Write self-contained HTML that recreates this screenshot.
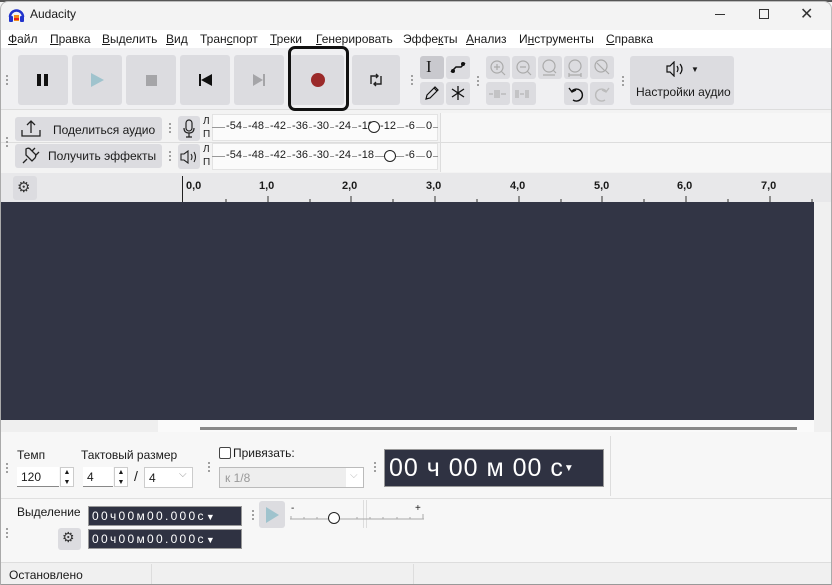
<!DOCTYPE html>
<html><head><meta charset="utf-8"><style>
*{margin:0;padding:0;box-sizing:border-box}
body{width:832px;height:585px;overflow:hidden;background:#f3f3f3;font-family:"Liberation Sans","Noto Sans CJK SC",sans-serif;font-size:12px;color:#1a1a1a;position:relative}
.a{position:absolute}
.btn{position:absolute;background:#dcdce0;border-radius:3px}
.grip{position:absolute;width:4px;height:12px;background-image:radial-gradient(circle,#999 1px,transparent 1.2px);background-size:4px 4px}
.sb{position:absolute;background:#dcdce0;border-radius:3px}
.dark{position:absolute;background:#2f3242;color:#fff;border:1px solid #999}
u{text-decoration:underline}
.m span{position:absolute;transform:translateX(-50%);font-size:11px;background:#fbfbfb;padding:0 1px}
</style></head><body>
<div class="a" style="left:0;top:0;width:832px;height:2px;background:#555"></div>
<!-- title -->
<div class="a" style="left:0;top:1px;width:832px;height:29px;background:#f3f3f3;border-radius:8px 8px 0 0;border:1px solid #bbb;border-bottom:none"></div>
<svg class="a" style="left:8px;top:7px" width="17" height="16" viewBox="0 0 17 16"><path d="M2 10 A6.5 6.5 0 0 1 15 10" fill="none" stroke="#2233cc" stroke-width="2.5"/><rect x="1" y="9" width="4" height="6" rx="1" fill="#2233cc"/><rect x="12" y="9" width="4" height="6" rx="1" fill="#2233cc"/><rect x="6" y="8" width="5" height="6" fill="#f28c1c"/><rect x="6" y="11" width="5" height="2" fill="#e82020"/></svg>
<div class="a" style="left:30px;top:7px;font-size:12px">Audacity</div>
<div class="a" style="left:715px;top:14px;width:10px;height:1px;background:#333"></div>
<div class="a" style="left:759px;top:9px;width:10px;height:10px;border:1px solid #333"></div>
<div class="a" style="left:800px;top:4px;font-size:16px;color:#333">✕</div>
<!-- menu -->
<div class="a" style="left:1px;top:30px;width:830px;height:18px;background:#fff"></div>
<div class="a" style="top:32px;left:8px;font-size:12px;white-space:nowrap;word-spacing:0">
<span class="a" style="left:0"><u>Ф</u>айл</span><span class="a" style="left:42px"><u>П</u>равка</span><span class="a" style="left:94px"><u>В</u>ыделить</span><span class="a" style="left:158px"><u>В</u>ид</span><span class="a" style="left:192px">Тран<u>с</u>порт</span><span class="a" style="left:262px"><u>Т</u>реки</span><span class="a" style="left:308px"><u>Г</u>енерировать</span><span class="a" style="left:395px">Эффе<u>к</u>ты</span><span class="a" style="left:458px"><u>А</u>нализ</span><span class="a" style="left:511px">И<u>н</u>струменты</span><span class="a" style="left:598px"><u>С</u>правка</span></div>
<!-- toolbar -->
<div class="a" style="left:1px;top:48px;width:830px;height:62px;background:#f0f0f2;border-bottom:1px solid #ddd"></div>
<div class="grip" style="left:5px;top:74px"></div>
<div class="btn" style="left:18px;top:55px;width:50px;height:50px"></div>
<div class="a" style="left:37px;top:74px;width:4px;height:12px;background:#111"></div><div class="a" style="left:44px;top:74px;width:4px;height:12px;background:#111"></div>
<div class="btn" style="left:72px;top:55px;width:50px;height:50px"></div>
<div class="a" style="left:91px;top:73px;border-left:13px solid #9fc3cd;border-top:7px solid transparent;border-bottom:7px solid transparent"></div>
<div class="btn" style="left:126px;top:55px;width:50px;height:50px"></div>
<div class="a" style="left:146px;top:75px;width:11px;height:11px;background:#a5a5a8"></div>
<div class="btn" style="left:180px;top:55px;width:50px;height:50px"></div>
<div class="a" style="left:199px;top:74px;width:2px;height:12px;background:#111"></div><div class="a" style="left:201px;top:74px;border-right:11px solid #111;border-top:6px solid transparent;border-bottom:6px solid transparent"></div>
<div class="btn" style="left:234px;top:55px;width:50px;height:50px"></div>
<div class="a" style="left:253px;top:74px;border-left:10px solid #a5a5a8;border-top:6px solid transparent;border-bottom:6px solid transparent"></div><div class="a" style="left:263px;top:74px;width:2px;height:12px;background:#a5a5a8"></div>
<div class="btn" style="left:290px;top:55px;width:54px;height:50px"></div>
<div class="a" style="left:288px;top:46px;width:61px;height:65px;border:3px solid #111;border-radius:7px"></div>
<div class="a" style="left:311px;top:73px;width:14px;height:14px;border-radius:50%;background:#9b2a2a"></div>
<div class="btn" style="left:352px;top:55px;width:48px;height:50px"></div>
<svg class="a" style="left:368px;top:72px" width="16" height="16" viewBox="0 0 16 16" fill="none" stroke="#222" stroke-width="1.4"><path d="M3 12V4h7M8 2l2 2-2 2M13 4v8H6M8 14l-2-2 2-2"/></svg>
<div class="grip" style="left:410px;top:74px"></div>
<div class="btn" style="left:420px;top:56px;width:24px;height:23px;background:#c9c9ce"></div>
<div class="a" style="left:426px;top:57px;font-size:17px;font-family:'Liberation Serif',serif">I</div>
<div class="btn" style="left:446px;top:56px;width:24px;height:23px"></div>
<svg class="a" style="left:448px;top:58px" width="20" height="20"><path d="M3 14 L8 9 L13 9 L17 5" stroke="#111" stroke-width="1.5" fill="none"/><circle cx="5" cy="13" r="2" fill="#111"/><circle cx="15" cy="6" r="2" fill="#111"/></svg>
<div class="btn" style="left:420px;top:82px;width:24px;height:23px"></div>
<svg class="a" style="left:423px;top:84px" width="18" height="18"><path d="M3 15l1-4 8-8 3 3-8 8z M11 4l3 3" stroke="#111" stroke-width="1.2" fill="none"/></svg>
<div class="btn" style="left:446px;top:82px;width:24px;height:23px"></div>
<svg class="a" style="left:449px;top:84px" width="18" height="18" stroke="#111" stroke-width="1.3"><path d="M9 2v14M3 5l12 8M15 5L3 13"/></svg>
<div class="grip" style="left:476px;top:75px"></div>
<div class="btn" style="left:486px;top:56px;width:24px;height:23px"></div><div class="btn" style="left:512px;top:56px;width:24px;height:23px"></div><div class="btn" style="left:538px;top:56px;width:24px;height:23px"></div><div class="btn" style="left:564px;top:56px;width:24px;height:23px"></div><div class="btn" style="left:590px;top:56px;width:24px;height:23px"></div>
<svg class="a" style="left:486px;top:56px" width="130" height="24" fill="none" stroke="#aaa" stroke-width="1.2"><circle cx="11" cy="11" r="6"/><path d="M15 15l4 4M8 11h6M11 8v6"/><circle cx="37" cy="11" r="6"/><path d="M41 15l4 4M34 11h6"/><circle cx="63" cy="10" r="6"/><path d="M57 19h12M67 14l3 3"/><circle cx="89" cy="10" r="6"/><path d="M83 19h12M83 17v4M95 17v4"/><circle cx="115" cy="10" r="6"/><path d="M119 14l4 4M111 7l8 8"/></svg>
<div class="btn" style="left:486px;top:82px;width:24px;height:23px"></div><div class="btn" style="left:512px;top:82px;width:24px;height:23px"></div>
<svg class="a" style="left:486px;top:82px" width="50" height="23" fill="none" stroke="#aaa" stroke-width="1"><path d="M3 12h4M9 8v8M11 8v8M13 8v8M15 12h5M30 8v8M32 8v8M34 12h4M40 8v8M42 8v8"/></svg>
<div class="btn" style="left:564px;top:82px;width:24px;height:23px"></div><div class="btn" style="left:590px;top:82px;width:24px;height:23px"></div>
<svg class="a" style="left:564px;top:82px" width="50" height="23" fill="none" stroke-width="1.4"><path d="M8 9a6 6 0 1 1 1 9" stroke="#111"/><path d="M5 6l3 4 4-2" stroke="#111"/><path d="M42 9a6 6 0 1 0-1 9" stroke="#bbb"/><path d="M45 6l-3 4-4-2" stroke="#bbb"/></svg>
<div class="grip" style="left:621px;top:75px"></div>
<div class="btn" style="left:630px;top:56px;width:104px;height:49px"></div>
<svg class="a" style="left:665px;top:61px" width="22" height="16"><path d="M2 5h3l4-4v14l-4-4H2z" fill="none" stroke="#111" stroke-width="1.2"/><path d="M12 5q2 3 0 6M15 3q4 5 0 10" fill="none" stroke="#111" stroke-width="1.2"/></svg>
<div class="a" style="left:691px;top:65px;font-size:8px">▼</div>
<div class="a" style="left:636px;top:85px;font-size:12px">Настройки аудио</div>
<!-- meter rows -->
<div class="a" style="left:1px;top:111px;width:830px;height:62px;background:#f3f3f3"></div>
<div class="a" style="left:440px;top:113px;width:391px;height:59px;background:#f7f7f7;border-left:1px solid #ddd"></div>
<div class="a" style="left:1px;top:142px;width:830px;height:1px;background:#ddd"></div>
<div class="grip" style="left:5px;top:136px"></div>
<div class="sb" style="left:15px;top:117px;width:147px;height:24px"></div>
<svg class="a" style="left:21px;top:119px" width="20" height="19"><path d="M1 11v6h18v-6M10 14V2M6 6l4-4 4 4" stroke="#222" stroke-width="1.3" fill="none"/></svg>
<div class="a" style="left:53px;top:123px">Поделиться аудио</div>
<div class="sb" style="left:15px;top:144px;width:147px;height:24px"></div>
<svg class="a" style="left:20px;top:145px" width="22" height="20"><path d="M3 18l4-4M6 10l6 6 3-3q2-3-1-5l-3-3q-2-3-5-1z M12 6l3-3M16 10l3-3" stroke="#222" stroke-width="1.3" fill="none"/></svg>
<div class="a" style="left:48px;top:149px">Получить эффекты</div>
<div class="grip" style="left:168px;top:122px"></div><div class="grip" style="left:168px;top:150px"></div>
<div class="sb" style="left:178px;top:116px;width:22px;height:25px"></div>
<svg class="a" style="left:183px;top:119px" width="12" height="20"><rect x="3" y="1" width="6" height="11" rx="3" fill="none" stroke="#222" stroke-width="1.2"/><path d="M1 9q0 5 5 5t5-5M6 14v4M3 18h6" fill="none" stroke="#222" stroke-width="1.2"/></svg>
<div class="sb" style="left:178px;top:144px;width:22px;height:25px"></div>
<svg class="a" style="left:180px;top:150px" width="20" height="14"><path d="M1 4h3l4-3v12l-4-3H1z" fill="none" stroke="#222" stroke-width="1.1"/><path d="M11 4q2 3 0 6M14 2q3 5 0 10" fill="none" stroke="#222" stroke-width="1.1"/></svg>
<div class="a" style="left:203px;top:115px;font-size:10px;line-height:13px">Л<br>П</div>
<div class="a" style="left:203px;top:143px;font-size:10px;line-height:13px">Л<br>П</div>
<div class="a" style="left:212px;top:114px;width:226px;height:27px;background:#fbfbfb;border:1px solid #e3e3e3"></div>
<div class="a" style="left:212px;top:143px;width:226px;height:27px;background:#fbfbfb;border:1px solid #e3e3e3"></div>
<div class="a" style="left:212px;top:127px;width:226px;height:1px;background:#999"></div>
<div class="a" style="left:212px;top:156px;width:226px;height:1px;background:#999"></div>
<div class="a m" style="left:0;top:120px"><span style="left:234px">-54</span><span style="left:256px">-48</span><span style="left:278px">-42</span><span style="left:300px">-36</span><span style="left:321px">-30</span><span style="left:343px">-24</span><span style="left:366px">-18</span><span style="left:388px">-12</span><span style="left:410px">-6</span><span style="left:429px">0</span></div>
<div class="a m" style="left:0;top:149px"><span style="left:234px">-54</span><span style="left:256px">-48</span><span style="left:278px">-42</span><span style="left:300px">-36</span><span style="left:321px">-30</span><span style="left:343px">-24</span><span style="left:366px">-18</span><span style="left:410px">-6</span><span style="left:429px">0</span></div>
<div class="a" style="left:368px;top:121px;width:12px;height:12px;border:1.3px solid #222;border-radius:50%;background:#fff"></div>
<div class="a" style="left:384px;top:150px;width:12px;height:12px;border:1.3px solid #222;border-radius:50%;background:#fff"></div>
<!-- ruler -->
<div class="a" style="left:1px;top:173px;width:830px;height:29px;background:#e8e8ea"></div>
<div class="sb" style="left:13px;top:176px;width:24px;height:24px"></div>
<div class="a" style="left:17px;top:178px;font-size:15px;color:#333">⚙︎</div>
<div class="a" style="left:182px;top:176px;width:1px;height:26px;background:#222"></div>
<div class="a" style="left:186px;top:180px;font-size:11px;font-weight:bold;white-space:nowrap">
<span class="a" style="left:0">0,0</span><span class="a" style="left:73px">1,0</span><span class="a" style="left:156px">2,0</span><span class="a" style="left:240px">3,0</span><span class="a" style="left:324px">4,0</span><span class="a" style="left:408px">5,0</span><span class="a" style="left:491px">6,0</span><span class="a" style="left:575px">7,0</span></div>
<svg class="a" style="left:180px;top:193px" width="640" height="10"><g stroke="#333"><line x1="46" y1="6" x2="46" y2="10"/><line x1="88" y1="3" x2="88" y2="10"/><line x1="130" y1="6" x2="130" y2="10"/><line x1="171" y1="3" x2="171" y2="10"/><line x1="213" y1="6" x2="213" y2="10"/><line x1="255" y1="3" x2="255" y2="10"/><line x1="297" y1="6" x2="297" y2="10"/><line x1="339" y1="3" x2="339" y2="10"/><line x1="381" y1="6" x2="381" y2="10"/><line x1="422" y1="3" x2="422" y2="10"/><line x1="464" y1="6" x2="464" y2="10"/><line x1="506" y1="3" x2="506" y2="10"/><line x1="548" y1="6" x2="548" y2="10"/><line x1="590" y1="3" x2="590" y2="10"/><line x1="632" y1="6" x2="632" y2="10"/></g></svg>
<!-- track -->
<div class="a" style="left:1px;top:202px;width:813px;height:218px;background:#323545"></div>
<div class="a" style="left:814px;top:202px;width:17px;height:230px;background:#f0f0f0"></div>
<div class="a" style="left:1px;top:420px;width:813px;height:12px;background:#efefef"></div>
<div class="a" style="left:158px;top:420px;width:656px;height:12px;background:#fafafa"></div>
<div class="a" style="left:200px;top:427px;width:597px;height:3px;background:#8a8a8a"></div>
<!-- bottom -->
<div class="a" style="left:1px;top:432px;width:830px;height:130px;background:#f7f7f7"></div>
<div class="a" style="left:610px;top:436px;width:1px;height:60px;background:#ddd"></div>
<div class="a" style="left:1px;top:498px;width:830px;height:1px;background:#e0e0e0"></div>
<div class="a" style="left:363px;top:500px;width:1px;height:28px;background:#ddd"></div>
<div class="a" style="left:366px;top:500px;width:1px;height:28px;background:#ddd"></div>
<div class="grip" style="left:5px;top:462px"></div>
<div class="a" style="left:17px;top:448px">Темп</div>
<div class="a" style="left:81px;top:448px">Тактовый размер</div>
<div class="a" style="left:17px;top:467px;width:42px;height:20px;background:#fff;border-bottom:1px solid #888;padding:3px 0 0 4px">120</div>
<div class="a" style="left:60px;top:467px;width:14px;height:20px;font-size:7px;line-height:10px;text-align:center;background:#fff;border:1px solid #ccc">▲<br>▼</div>
<div class="a" style="left:83px;top:467px;width:30px;height:20px;background:#fff;border-bottom:1px solid #888;padding:3px 0 0 4px">4</div>
<div class="a" style="left:114px;top:467px;width:14px;height:20px;font-size:7px;line-height:10px;text-align:center;background:#fff;border:1px solid #ccc">▲<br>▼</div>
<div class="a" style="left:134px;top:468px;font-size:14px">/</div>
<div class="a" style="left:144px;top:467px;width:49px;height:21px;background:#fff;border:1px solid #ccc;padding:3px 0 0 4px">4<span style="position:absolute;left:34px;top:1px;color:#999;font-size:10px">⌵</span></div>
<div class="grip" style="left:207px;top:461px"></div>
<div class="a" style="left:219px;top:447px;width:12px;height:12px;border:1px solid #444;border-radius:2px;background:#fff"></div>
<div class="a" style="left:233px;top:446px">Привязать:</div>
<div class="a" style="left:219px;top:467px;width:145px;height:21px;background:#fff;border:1px solid #bbb"></div>
<div class="a" style="left:220px;top:468px;width:126px;height:19px;background:#eee;color:#999;padding:3px 0 0 5px">к 1/8</div>
<div class="a" style="left:350px;top:470px;color:#bbb;font-size:10px">⌵</div>
<div class="grip" style="left:373px;top:461px"></div>
<div class="dark" style="left:384px;top:449px;width:220px;height:38px;font-size:25px;line-height:36px;padding-left:4px;white-space:nowrap;letter-spacing:1px">00 ч 00 м 00 с<span style="font-size:10px;vertical-align:5px">▼</span></div>
<div class="grip" style="left:5px;top:527px"></div>
<div class="a" style="left:17px;top:505px">Выделение</div>
<div class="dark" style="left:88px;top:506px;width:154px;height:20px;font-size:12px;line-height:18px;padding-left:3px;letter-spacing:2.3px;white-space:nowrap">00ч00м00.000с<span style="font-size:9px">▼</span></div>
<div class="dark" style="left:88px;top:529px;width:154px;height:20px;font-size:12px;line-height:18px;padding-left:3px;letter-spacing:2.3px;white-space:nowrap">00ч00м00.000с<span style="font-size:9px">▼</span></div>
<div class="sb" style="left:58px;top:528px;width:23px;height:22px"></div>
<div class="a" style="left:62px;top:529px;font-size:14px;color:#333">⚙︎</div>
<div class="grip" style="left:251px;top:509px"></div>
<div class="sb" style="left:259px;top:501px;width:26px;height:27px"></div>
<div class="a" style="left:266px;top:507px;border-left:13px solid #9fc3cd;border-top:8px solid transparent;border-bottom:8px solid transparent"></div>
<div class="a" style="left:291px;top:503px;font-size:10px">-</div><div class="a" style="left:415px;top:503px;font-size:10px">+</div>
<svg class="a" style="left:290px;top:512px" width="136" height="10"><line x1="0" y1="7" x2="134" y2="7" stroke="#aaa"/><g stroke="#aaa"><line x1="1" y1="4" x2="1" y2="7"/><line x1="14" y1="5" x2="14" y2="7"/><line x1="27" y1="5" x2="27" y2="7"/><line x1="67" y1="5" x2="67" y2="7"/><line x1="80" y1="5" x2="80" y2="7"/><line x1="93" y1="5" x2="93" y2="7"/><line x1="107" y1="5" x2="107" y2="7"/><line x1="120" y1="5" x2="120" y2="7"/><line x1="133" y1="2" x2="133" y2="7"/></g></svg>
<div class="a" style="left:328px;top:512px;width:12px;height:12px;border:1.3px solid #222;border-radius:50%;background:#fff"></div>
<!-- status -->
<div class="a" style="left:1px;top:562px;width:830px;height:23px;background:#f0f0f0;border-top:1px solid #ddd;border-bottom:1px solid #999"></div>
<div class="a" style="left:151px;top:564px;width:1px;height:20px;background:#ddd"></div>
<div class="a" style="left:413px;top:564px;width:1px;height:20px;background:#ddd"></div>
<div class="a" style="left:9px;top:568px">Остановлено</div>
<div class="a" style="left:0;top:30px;width:1px;height:555px;background:#aaa"></div>
<div class="a" style="left:831px;top:30px;width:1px;height:555px;background:#aaa"></div>
</body></html>
